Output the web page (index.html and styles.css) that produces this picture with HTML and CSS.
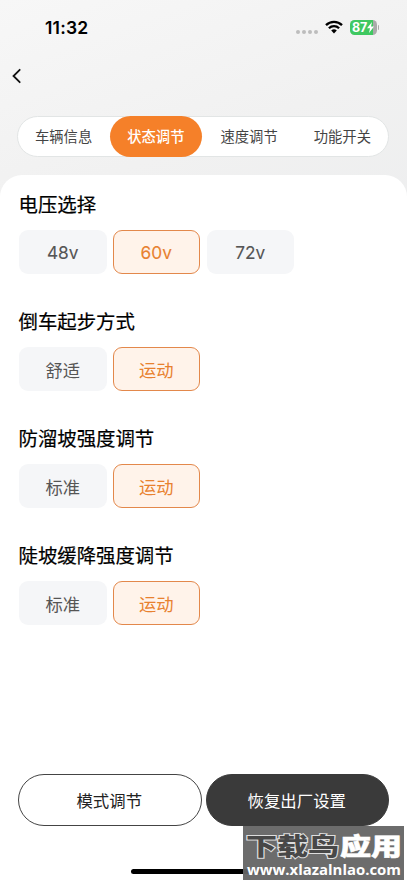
FILE: index.html
```html
<!DOCTYPE html>
<html lang="zh-CN">
<head>
<meta charset="utf-8">
<title>状态调节</title>
<link rel="stylesheet" href="styles.css">
</head>
<body>
<div class="screen">
  <header class="status">
    <span class="time">11:32</span>
    <div class="indicators">
      <span class="dots"><i></i><i></i><i></i><i></i></span>
      <svg class="wifi" width="18" height="14" viewBox="0 0 18 14" fill="none" stroke="#000" stroke-width="2.3">
        <path d="M1 5.1a11.4 11.4 0 0 1 16 0"/>
        <path d="M3.9 8.2a7.3 7.3 0 0 1 10.2 0"/>
        <path d="M9 13.4 6.2 10.6a4 4 0 0 1 5.6 0z" fill="#000" stroke="none"/>
      </svg>
      <span class="battery">
        <span class="cell">87<svg width="7" height="11" viewBox="0 0 7 11"><path d="M5 0 0 6.2h3L2 11l5-6.6H4z" fill="#fff"/></svg></span>
        <span class="cap"></span>
      </span>
    </div>
  </header>
  <nav class="back">
    <svg width="10" height="16" viewBox="0 0 10 16" fill="none" stroke="#111" stroke-width="1.8" stroke-linecap="round"><path d="M8.7 1.8 2.5 8l6.2 6.2"/></svg>
  </nav>
  <div class="tabs">
    <span class="tab">车辆信息</span>
    <span class="tab active">状态调节</span>
    <span class="tab">速度调节</span>
    <span class="tab">功能开关</span>
  </div>
  <main class="panel">
    <section class="group">
      <h2>电压选择</h2>
      <div class="options"><span class="option latin">48v</span><span class="option latin selected">60v</span><span class="option latin">72v</span></div>
    </section>
    <section class="group">
      <h2>倒车起步方式</h2>
      <div class="options"><span class="option">舒适</span><span class="option selected">运动</span></div>
    </section>
    <section class="group">
      <h2>防溜坡强度调节</h2>
      <div class="options"><span class="option">标准</span><span class="option selected">运动</span></div>
    </section>
    <section class="group">
      <h2>陡坡缓降强度调节</h2>
      <div class="options"><span class="option">标准</span><span class="option selected">运动</span></div>
    </section>
    <footer class="actions">
      <span class="action">模式调节</span>
      <span class="action dark">恢复出厂设置</span>
    </footer>
  </main>
  <div class="home-bar"></div>
  <div class="watermark">
    <svg width="161" height="54" viewBox="0 0 161 54">
      <g class="mark-name">
        <text class="outlined" x="3" y="29" textLength="93" lengthAdjust="spacingAndGlyphs">下载鸟</text>
        <text class="solid" x="97" y="29" textLength="62" lengthAdjust="spacingAndGlyphs">应用</text>
      </g>
      <text class="url" x="4" y="49" textLength="154" lengthAdjust="spacingAndGlyphs">www.xlazalnlao.com</text>
    </svg>
  </div>
</div>
</body>
</html>
```
FILE: styles.css
```css
* { box-sizing: border-box; }
body {
  margin: 0;
  font-family: Inter, "Noto Sans CJK SC", sans-serif;
  color: #000;
}
.screen {
  position: relative;
  width: 407px;
  height: 883px;
  overflow: hidden;
  display: flex;
  flex-direction: column;
  background: linear-gradient(160deg, #f7f7f7 0, #f1f1f1 200px, #ecedee 400px);
}
.status {
  height: 56px;
  padding: 0 28px 0 45px;
  display: flex;
  align-items: center;
  justify-content: space-between;
}
.time { margin-top: -2px; font-size: 17.5px; font-weight: 600; letter-spacing: 0.2px; }
.indicators { display: flex; align-items: center; margin-top: -2px; }
.dots { display: flex; gap: 1.7px; margin: 9px 7px 0 0; }
.dots i { width: 4px; height: 4px; border-radius: 50%; background: #bdbdbd; }
.wifi { margin-right: 7px; }
.battery { display: flex; align-items: center; gap: 1px; }
.cell {
  width: 27px;
  height: 15px;
  border-radius: 4.5px;
  background: linear-gradient(90deg, #3fc861 87%, #aaa 87%);
  display: flex;
  align-items: center;
  justify-content: center;
  color: #fff;
  font-size: 12.5px;
  font-weight: 700;
  letter-spacing: -0.3px;
}
.cap { width: 1.5px; height: 5px; border-radius: 0 2px 2px 0; background: #aaa; }
.back { height: 60px; padding: 12px 0 0 11px; }
.back svg { display: block; }
.tabs {
  flex: none;
  height: 41px;
  margin: 0 18px 0 17px;
  display: flex;
  border: 1px solid #e2e5e5;
  border-radius: 21px;
  background: #fff;
}
.tab {
  flex: 1;
  margin: -1px 0;
  padding-bottom: 2px;
  border-radius: 21px;
  display: flex;
  align-items: center;
  justify-content: center;
  font-size: 14.3px;
  color: #444;
}
.tab:first-child { padding-right: 2px; }
.tab:nth-child(n+3) { padding-left: 2px; }
.tab.active { margin: -1px 0 -1px -1px; background: #f58029; color: #fff; font-weight: 500; }
.panel {
  flex: 1;
  margin-top: 18px;
  padding: 13px 18px 0 19px;
  border-radius: 22px 22px 0 0;
  background: #fff;
  display: flex;
  flex-direction: column;
}
.group { height: 117px; flex: none; }
h2 {
  margin: 0 0 0 -0.5px;
  height: 42px;
  padding-top: 1px;
  line-height: 32px;
  font-size: 19.4px;
  font-weight: 400;
  -webkit-text-stroke: 0.2px #000;
}
.options { display: flex; gap: 6.5px; }
.option {
  width: 87.5px;
  height: 44px;
  border-radius: 9px;
  background: #f5f6f8;
  display: flex;
  align-items: center;
  justify-content: center;
  font-size: 17.3px;
  color: #555;
}
.option + .option { margin-left: -0.5px; }
.option:nth-child(3) { margin-left: 0; }
.option.latin { -webkit-text-stroke: 0.1px; }
.option.selected { border: 1px solid #e3884b; background: #fff3ea; color: #e8812f; }
.actions { display: flex; gap: 4px; margin: 118px 0 0 -1px; }
.action {
  flex: 1;
  height: 52px;
  padding: 0 1px 1px 0;
  border: 1px solid #444;
  border-radius: 26px;
  display: flex;
  align-items: center;
  justify-content: center;
  font-size: 16.4px;
  color: #222;
}
.action.dark { background: #3a3a3a; border-color: #3a3a3a; color: #fff; }
.home-bar {
  position: absolute;
  left: 131px;
  top: 869px;
  width: 145px;
  height: 5px;
  border-radius: 3px;
  background: #000;
}
.watermark {
  position: absolute;
  left: 243px;
  top: 826px;
  width: 161px;
  height: 54px;
  background: rgba(100, 100, 100, 0.95);
}
.watermark svg { display: block; }
.mark-name { font-family: "Noto Sans CJK SC", sans-serif; font-size: 24px; font-weight: 900; }
.outlined { fill: #484848; stroke: #ddd; stroke-width: 2px; paint-order: stroke; }
.solid { fill: #fff; stroke: #fff; stroke-width: 0.6px; }
.url { font-family: "Open Sans", sans-serif; font-size: 13.5px; font-weight: 700; fill: #fff; }
```
